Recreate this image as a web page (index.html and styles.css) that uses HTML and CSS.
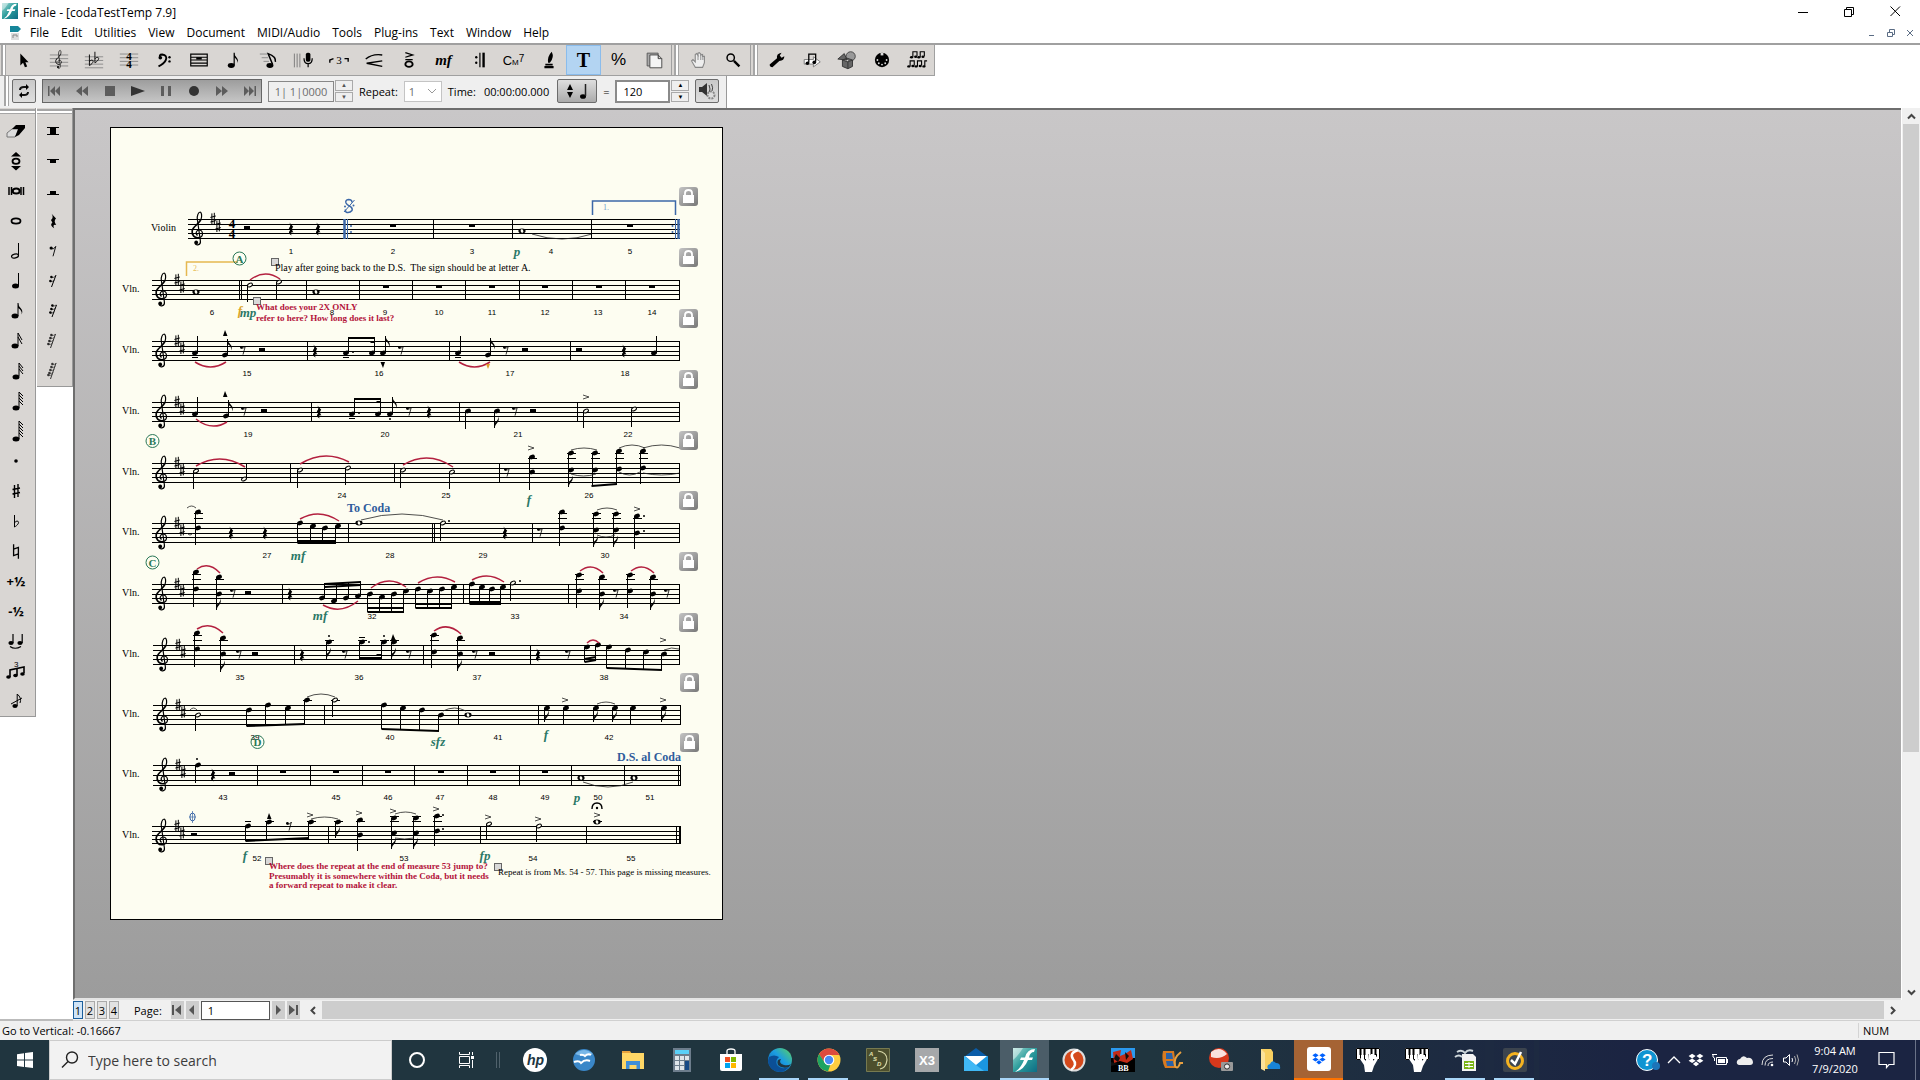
FILE: index.html
```
<!DOCTYPE html>
<html lang="en">
<head>
    <meta charset="UTF-8">
    <meta name="viewport" content="width=device-width, initial-scale=1.0">
    <title>Finale - [codaTestTemp 7.9]</title>
    <link rel="stylesheet" href="styles.css">
</head>
<body>
    <!-- shared music glyphs -->
    <svg class="defs" width="0" height="0" aria-hidden="true">
        <defs>
            <linearGradient id="lock-bg" x1="0" y1="0" x2="1" y2="1">
                <stop offset="0" stop-color="#c4c4c4"/><stop offset="1" stop-color="#777"/>
            </linearGradient>
            <linearGradient id="fin" x1="0" y1="0" x2="1" y2="1">
                <stop offset="0" stop-color="#9fd8d2"/><stop offset=".5" stop-color="#2c9c9c"/><stop offset="1" stop-color="#0d6c84"/>
            </linearGradient>
            <linearGradient id="edge" x1="0" y1="1" x2="1" y2="0">
                <stop offset="0" stop-color="#0c59a4"/><stop offset=".55" stop-color="#1b9de2"/><stop offset="1" stop-color="#5fd35a"/>
            </linearGradient>
            <g id="clef" fill="none" stroke="#000">
                <path stroke-width="1.2" d="M-.4 2.4C-3 1-1.8-3 1-3C5-3 6.2 3.4 1.2 4.6"/>
                <path stroke-width="1.7" d="M1.2 4.6C-3.4 5.4-6.6 2-5.8-2.4C-5-6.4 1-9 3-13.6"/>
                <path stroke-width="1.2" d="M3-13.6C4.2-17 3.6-20.5 2.2-21C.2-21-1-17-.7-14L2.4 8C3 12-1.6 13-3 10.4"/>
                <circle cx="-1.8" cy="9.4" r="1.9" fill="#000" stroke="none"/>
            </g>
            <path id="sharp" fill="none" stroke="#000" d="M-1.1-5.6V6M1.3-6.2V5.4M-2.6-1.6L2.8-3M-2.6 3L2.8 1.6"/>
            <path id="flat" fill="none" stroke="#000" d="M-2-7V5C1 3.4 3 .6 1.6-.6C.4-1.4-1.2-.4-2 .8"/>
            <path id="natural" fill="none" stroke="#000" stroke-width="1.1" d="M-2-6V3.4L2 2M2 6V-3.4L-2-2"/>
            <path id="rest-q" d="M-1.6-6.4L2.2-2.2Q-.2 0 2.4 3.4Q-1.2 2.6.6 6.4Q-3.8 3.8-1 1.4L-2.2-.8Q.4-3-1.6-6.4Z"/>
            <g id="rest-8"><circle cx="-1.6" cy="-2.6" r="1.4"/><path fill="none" stroke="#000" stroke-width=".8" d="M-2-2Q1-1 2.4-4L0 4.6"/></g>
            <g id="dn"><circle cx="-1.6" cy="-2" r="1.3"/><path fill="none" stroke="#000" stroke-width=".6" d="M-2-1.4Q0-1 2.4-2.6"/></g>
            <path id="flag" d="M0 0Q.4 3 2.6 5Q5.4 8 3.6 11.4Q4.4 7.6 0 5Z"/>
            <ellipse id="head" rx="3" ry="2.2" transform="rotate(-20)"/>
            <g id="whole"><ellipse rx="3.6" ry="2.4"/><ellipse rx="1.3" ry="1.8" fill="#fefef2" transform="rotate(-20)"/></g>
            <g id="finale-icon"><path fill="url(#fin)" d="M0 0H24V24H0Z"/><path fill="#fff" d="M2 24Q8 20 11 12H7L8 9.5H12Q14 1 22 1L21 4Q17 4 16 9.5H20L19 12H15Q11 22 2 24Z"/><path fill="#fff" opacity=".45" d="M0 0H10Q5 8 0 12Z"/></g>
            <g id="dropbox"><path d="M5 1L9.500 4L5 7L.5 4ZM15 1L19.500 4L15 7L10.500 4ZM5 7L9.500 10L5 13L.5 10ZM15 7L19.500 10L15 13L10.500 10ZM10 11L14 14L10 17L6 14Z"/></g>
            <g id="hand-keys"><path fill="#fff" d="M0 0H24V12H0Z"/><path stroke="#000" fill="none" d="M.5 .5H23.500V11.500H.5ZM4.500 6V12M8.500 6V12M12.500 6V12M16.500 6V12M20.500 6V12"/><path stroke="#000" stroke-width="2" d="M4.500 0V7M8.500 0V7M15.500 0V7M19.500 0V7"/><path fill="#fff" d="M9 24L8 17L4 11L6 9L10 13L10 6H12.500L13 12L15 6H17.500L17 13L21 8L22.500 10L18 18L16 24Z"/></g>
        </defs>
    </svg>

    <header class="titlebar">
        <svg class="app-icon" viewBox="0 0 24 24"><use href="#finale-icon"/></svg>
        <span class="title">Finale - [codaTestTemp 7.9]</span>
        <div class="win-buttons">
            <button aria-label="Minimize"><svg width="11" height="11"><path d="M0 6.500H10"/></svg></button>
            <button aria-label="Restore"><svg width="11" height="11"><path d="M.5 3.500H7.500V10.500H.5ZM2.500 3V1.500H9.500V8.500H8"/></svg></button>
            <button aria-label="Close"><svg width="11" height="11"><path d="M.5 .5L10 10M10 .5L.5 10"/></svg></button>
        </div>
    </header>

    <nav class="menubar">
        <svg class="doc-icon" width="12" height="16"><path fill="#16869a" d="M1 1H9L12 4L9 7H1Z"/><path fill="#ddd" d="M2 8H10V15H2Z"/><path stroke="#888" fill="none" d="M4 13V10H8V12"/></svg>
        <button>File</button><button>Edit</button><button>Utilities</button><button>View</button><button>Document</button><button>MIDI/Audio</button><button>Tools</button><button>Plug-ins</button><button>Text</button><button>Window</button><button>Help</button>
        <div class="mdi-buttons">
            <button aria-label="Minimize document"><svg width="8" height="8"><path d="M1 6.500H6"/></svg></button>
            <button aria-label="Restore document"><svg width="8" height="8"><path d="M.5 3.500H5.500V7.500H.5ZM2.500 3V.5H7.500V5.500H6"/></svg></button>
            <button aria-label="Close document"><svg width="8" height="8"><path d="M1 1L7 7M7 1L1 7"/></svg></button>
        </div>
    </nav>

    <div class="toolbar tools">
        <div class="group">
            <i class="grip"></i>
            <button aria-label="Selection"><svg viewBox="0 0 24 24"><path d="M8 5V18L11 15L13 20L15.500 19L13.500 14.500H17Z"/></svg></button>
            <button aria-label="Staff"><svg viewBox="0 0 24 24"><path class="lines" d="M2 6.500H22M2 10.500H22M2 14.500H22M2 18.500H22"/><use href="#clef" transform="translate(12 14) scale(.6)"/></svg></button>
            <button aria-label="Key signature"><svg viewBox="0 0 24 24"><path class="lines" d="M2 8.500H22M2 12.500H22M2 16.500H22M2 20.500H22"/><use href="#flat" transform="translate(9 13)"/><use href="#flat" transform="translate(15 10)"/></svg></button>
            <button aria-label="Time signature"><svg viewBox="0 0 24 24"><path class="lines" d="M2 5.500H22M2 9.500H22M2 13.500H22M2 17.500H22"/><text class="time" x="12" y="12">4</text><text class="time" x="12" y="21">4</text></svg></button>
            <button aria-label="Clef"><svg viewBox="0 0 24 24"><path fill="none" stroke="#000" stroke-width="2" d="M8 10Q6 6 10 6Q16 7 14 12Q12 16 6 19"/><circle cx="8" cy="9.500" r="2"/><circle cx="18" cy="9" r="1.300"/><circle cx="18" cy="13.500" r="1.300"/></svg></button>
            <button aria-label="Measure"><svg viewBox="0 0 24 24"><path fill="none" stroke="#000" stroke-width="1.300" d="M3 5.500H21V18.500H3ZM3 9H21M3 12H21M3 15.500H21"/><path d="M9 9H15V11.500H9Z"/></svg></button>
            <button aria-label="Simple entry"><svg viewBox="0 0 24 24"><ellipse cx="9" cy="18" rx="3.800" ry="2.700"/><path stroke="#000" stroke-width="1.300" d="M12.200 18V4"/><use href="#flag" x="12" y="4"/></svg></button>
            <button aria-label="Speedy entry"><svg viewBox="0 0 24 24"><ellipse cx="13" cy="18" rx="3.800" ry="2.700"/><path fill="none" stroke="#000" stroke-width="1.600" d="M16 17L11 5Q20 8 19 14"/><path class="lines" d="M2 5.500H10M4 9.500H11M6 13.500H12"/></svg></button>
            <button aria-label="HyperScribe"><svg viewBox="0 0 24 24"><path fill="none" stroke="#777" d="M1.500 5V20M4.500 5V20M7.500 5V20"/><rect x="14" y="4" width="5" height="10" rx="2"/><path fill="none" stroke="#000" stroke-width="1.300" d="M12 10Q12 16 16.500 16Q21 16 21 10M16.500 16V20"/></svg></button>
            <button aria-label="Tuplet"><svg viewBox="0 0 24 24"><path fill="none" stroke="#000" stroke-width="1.500" d="M2 15V12L6 10.500M18 10.500H22V14"/><text x="9" y="16" class="trip">3</text></svg></button>
            <button aria-label="Smart shape"><svg viewBox="0 0 24 24"><path fill="none" stroke="#000" stroke-width="1.500" d="M3 11Q10 5 21 6.500M21 13L4 15.500L21 19"/></svg></button>
            <button aria-label="Articulation"><svg viewBox="0 0 24 24"><path fill="none" stroke="#000" stroke-width="1.400" d="M8 4L16 6.500L8 9M8 11.500H16"/><ellipse cx="12" cy="16.500" rx="4" ry="3" fill="none" stroke="#000" stroke-width="2"/></svg></button>
            <button class="expr" aria-label="Expression">mf</button>
            <button aria-label="Repeat"><svg viewBox="0 0 24 24"><path stroke="#000" stroke-width="2.600" d="M17 4V20"/><path stroke="#000" stroke-width="1.300" d="M13 4V20"/><circle cx="9" cy="9" r="1.300"/><circle cx="9" cy="15" r="1.300"/></svg></button>
            <button class="chord" aria-label="Chord">C<small>M</small><sup>7</sup></button>
            <button aria-label="Lyrics"><svg viewBox="0 0 24 24"><path d="M15 3Q10 8 11 15H13Q18 9 15 3ZM8 16H16V18H8ZM7 18.500H17V21H7Z"/></svg></button>
            <button class="text-tool active" aria-label="Text" aria-pressed="true">T</button>
            <button class="percent" aria-label="Resize">%</button>
            <button aria-label="Page layout"><svg viewBox="0 0 24 24"><path fill="#aaa" stroke="#555" d="M4.500 4.500H16.500V18.500H4.500Z"/><path fill="#f4f4f4" stroke="#444" d="M7.500 6.500H16.500L20.500 10.500V20.500H7.500ZM16.500 6.500V10.500H20.500"/></svg></button>
        </div>
        <div class="group">
            <i class="grip"></i>
            <button aria-label="Hand grabber"><svg viewBox="0 0 24 24"><path fill="#eee" stroke="#888" stroke-width="1.200" d="M9 20L5 13L6.500 11.500L9 14V6L10.500 5L12 7V4.500L13.500 4L15 5.500V6.500L17 6V8L19 8V15L17 20Z"/><path stroke="#888" d="M12 7V12M15 6V12M17.300 8V12"/></svg></button>
            <button aria-label="Zoom"><svg viewBox="0 0 24 24"><circle cx="9.500" cy="9.500" r="4" fill="none" stroke="#000" stroke-width="1.600"/><path stroke="#000" stroke-width="2.600" d="M13 13L19 19"/></svg></button>
        </div>
        <div class="group">
            <i class="grip"></i>
            <button aria-label="Special tools"><svg viewBox="0 0 24 24"><path d="M4 17L12 10Q11 5 17 4L15 7L17 9.500L20 8Q20 13 14.500 13L7 20Q4 20 4 17Z"/></svg></button>
            <button aria-label="Note mover"><svg viewBox="0 0 24 24"><path fill="#fff" stroke="#777" d="M3.500 11.500H13.500V8.500L21 14L13.500 19.500V16.500H3.500Z"/><path fill="none" stroke="#000" stroke-width="1.400" d="M8.500 15V5.500H16V14"/><circle cx="7" cy="15.500" r="2"/><circle cx="14.500" cy="14.500" r="2"/></svg></button>
            <button aria-label="Graphics"><svg viewBox="0 0 24 24"><circle cx="16" cy="8" r="5" fill="#999" stroke="#444"/><path fill="#666" stroke="#333" d="M2 11L9 5L12 12ZM7 12L12 10L18 12V19L13 21.500L7 19ZM7 12L13 14L18 12M13 14V21"/></svg></button>
            <button aria-label="MIDI"><svg viewBox="0 0 24 24"><circle cx="12" cy="12" r="7.800"/><g fill="#ddd"><circle cx="7" cy="12" r="1"/><circle cx="8.500" cy="15.500" r="1"/><circle cx="12" cy="17" r="1"/><circle cx="15.500" cy="15.500" r="1"/><circle cx="17" cy="12" r="1"/><path d="M10.500 4H13.500V7H10.500Z"/></g></svg></button>
            <button aria-label="Mirror"><svg viewBox="0 0 24 24"><path fill="none" stroke="#000" stroke-width="1.200" d="M7.500 9V3H12V8M15.500 9V3H20V8M4.500 19V13H9V18M12.500 19V13H17V18M20.500 19V13H23"/><ellipse cx="6" cy="9" rx="1.700" ry="1.300"/><ellipse cx="10.500" cy="8.500" rx="1.700" ry="1.300"/><ellipse cx="14" cy="9" rx="1.700" ry="1.300"/><ellipse cx="18.500" cy="8.500" rx="1.700" ry="1.300"/><ellipse cx="3" cy="19" rx="1.700" ry="1.300"/><ellipse cx="7.500" cy="18.500" rx="1.700" ry="1.300"/><ellipse cx="11" cy="19" rx="1.700" ry="1.300"/><ellipse cx="15.500" cy="18.500" rx="1.700" ry="1.300"/><ellipse cx="19.500" cy="19" rx="1.700" ry="1.300"/></svg></button>
        </div>
    </div>

    <div class="toolbar playback">
        <i class="grip"></i>
        <button class="raised refresh" aria-label="Playback options"><svg width="14" height="14"><path fill="none" stroke="#111" stroke-width="2" d="M3 6Q3 3 7 3H10M11 8Q11 11 7 11H4"/><path d="M9 0L12 3L9 6ZM5 8L2 11L5 14Z"/></svg></button>
        <div class="transport">
            <button aria-label="To start"><svg viewBox="0 0 16 16"><path d="M2 3H3.500V13H2ZM9 3V13L4 8ZM14 3V13L9 8Z"/></svg></button>
            <button aria-label="Rewind"><svg viewBox="0 0 16 16"><path d="M8 3V13L2 8ZM14 3V13L8 8Z"/></svg></button>
            <button aria-label="Stop"><svg viewBox="0 0 16 16"><path d="M3 3H13V13H3Z"/></svg></button>
            <button aria-label="Play"><svg viewBox="0 0 16 16"><path fill="#333" d="M1 3L15 8L1 13Z"/></svg></button>
            <button aria-label="Pause"><svg viewBox="0 0 16 16"><path d="M3 3H6V13H3ZM10 3H13V13H10Z"/></svg></button>
            <button aria-label="Record"><svg viewBox="0 0 16 16"><circle cx="8" cy="8" r="5" fill="#333"/></svg></button>
            <button aria-label="Fast forward"><svg viewBox="0 0 16 16"><path d="M2 3V13L8 8ZM8 3V13L14 8Z"/></svg></button>
            <button aria-label="To end"><svg viewBox="0 0 16 16"><path d="M2 3V13L7 8ZM7 3V13L12 8ZM12.500 3H14V13H12.500Z"/></svg></button>
        </div>
        <input class="counter" aria-label="Counter" value="1| 1|0000" disabled>
        <div class="spin"><button aria-label="Counter up" disabled>▲</button><button aria-label="Counter down" disabled>▼</button></div>
        <label for="repeat">Repeat:</label>
        <select id="repeat" disabled><option>1</option></select>
        <span>Time:</span>
        <span class="time-value">00:00:00.000</span>
        <button class="raised beat" aria-label="Beat unit"><svg width="26" height="18"><path d="M3 8L6 2L9 8ZM3 10H9L6 16Z"/><ellipse cx="19" cy="14.500" rx="3" ry="2.300"/><path stroke="#222" stroke-width="1.500" d="M21.500 14V2"/></svg></button>
        <label for="tempo">=</label>
        <input id="tempo" class="tempo" value="120">
        <div class="spin"><button aria-label="Tempo up">▲</button><button aria-label="Tempo down">▼</button></div>
        <button class="raised sound" aria-label="Playback settings"><svg width="20" height="20"><path fill="#333" d="M2 6H5L10 2V15L5 11H2Z"/><path fill="none" stroke="#444" d="M12 4Q14 8 12 12M14.500 3Q16.500 7 15 10"/><circle cx="14" cy="14" r="3.500" fill="#ddd" stroke="#888" stroke-width="2" stroke-dasharray="2 1"/></svg></button>
    </div>

    <main class="workspace">
        <aside class="palettes">
            <div class="palette">
                <i class="grip-h"></i>
                <button aria-label="Eraser"><svg viewBox="0 0 24 24"><path fill="#ddd" stroke="#777" d="M3 14L8 10H16L11 18H3Z"/><path d="M8 10L12 6H21V9L15 16L11 18L14 10Z"/></svg></button>
                <button aria-label="Repitch"><svg viewBox="0 0 24 24"><path d="M7 7.500L12 3L17 7.500ZM7 17L12 21.500L17 17Z"/><ellipse cx="12" cy="12.300" rx="3.500" ry="2.600" fill="none" stroke="#000" stroke-width="1.800"/></svg></button>
                <button aria-label="Double whole note"><svg viewBox="0 0 24 24"><path stroke="#000" stroke-width="1.500" d="M5 8V16M7.500 8V16M17 8V16M19.500 8V16"/><ellipse cx="12.200" cy="12" rx="3.500" ry="2.500" fill="none" stroke="#000" stroke-width="2"/></svg></button>
                <button aria-label="Whole note"><svg viewBox="0 0 24 24"><ellipse cx="12" cy="12" rx="4.500" ry="2.600" fill="none" stroke="#000" stroke-width="1.800"/></svg></button>
                <button aria-label="Half note"><svg viewBox="0 0 24 24"><ellipse cx="11" cy="17" rx="3.500" ry="2" fill="none" stroke="#000" stroke-width="1.200" transform="rotate(-15 11 17)"/><path stroke="#000" d="M14.500 16V4"/></svg></button>
                <button aria-label="Quarter note"><svg viewBox="0 0 24 24"><ellipse cx="11.500" cy="17" rx="3.500" ry="2.500"/><path stroke="#000" d="M14.500 17V4"/></svg></button>
                <button aria-label="Eighth note"><svg viewBox="0 0 24 24"><ellipse cx="11" cy="17" rx="3.500" ry="2.500"/><path stroke="#000" d="M14 17V4"/><use href="#flag" x="14" y="4"/></svg></button>
                <button aria-label="16th note"><svg viewBox="0 0 24 24"><ellipse cx="11" cy="17" rx="3.500" ry="2.500"/><path fill="none" stroke="#000" d="M14 17V4L18 11M14 8L18 15"/></svg></button>
                <button aria-label="32nd note"><svg viewBox="0 0 24 24"><ellipse cx="12" cy="18" rx="3.500" ry="2.500"/><path fill="none" stroke="#000" d="M15 17V4L19 9M15 7L19 12M15 10L19 15"/></svg></button>
                <button aria-label="64th note"><svg viewBox="0 0 24 24"><ellipse cx="12" cy="19" rx="3.500" ry="2.500"/><path fill="none" stroke="#000" d="M15 19V3L19 7M15 6L19 10M15 9L19 13M15 12L19 16"/></svg></button>
                <button aria-label="128th note"><svg viewBox="0 0 24 24"><ellipse cx="12" cy="20" rx="3.500" ry="2.500"/><path fill="none" stroke="#000" d="M15 20V2L19 6M15 5L19 9M15 8L19 12M15 11L19 15M15 14L19 18"/></svg></button>
                <button aria-label="Augmentation dot"><svg viewBox="0 0 24 24"><circle cx="12" cy="12" r="1.800"/></svg></button>
                <button aria-label="Sharp"><svg viewBox="0 0 24 24"><path fill="none" stroke="#000" stroke-width="1.400" d="M10.500 6V19M14 5V18M8.500 10.500L16 9M8.500 15L16 13.500"/></svg></button>
                <button aria-label="Flat"><svg viewBox="0 0 24 24"><use href="#flat" x="12.500" y="13"/></svg></button>
                <button aria-label="Natural"><svg viewBox="0 0 24 24"><use href="#natural" transform="translate(12 12.500) scale(1.200)"/></svg></button>
                <button class="half-step" aria-label="Half step up">+½</button>
                <button class="half-step" aria-label="Half step down">-½</button>
                <button aria-label="Tie"><svg viewBox="0 0 24 24"><ellipse cx="7" cy="14" rx="2.600" ry="2"/><ellipse cx="16" cy="14" rx="2.600" ry="2"/><path fill="none" stroke="#000" stroke-width="1.200" d="M9 14V5M18.200 14V5M6 17.500Q11 21 17 17.500"/></svg></button>
                <button aria-label="Tuplet entry"><svg viewBox="0 0 24 24"><path fill="none" stroke="#000" stroke-width="1.600" d="M6 18V11L20 8V14M13 16V10"/><ellipse cx="4.500" cy="18" rx="2.300" ry="1.700"/><ellipse cx="11.500" cy="16.500" rx="2.300" ry="1.700"/><ellipse cx="18.500" cy="15" rx="2.300" ry="1.700"/><text class="tiny" x="10" y="8">3</text></svg></button>
                <button aria-label="Grace note"><svg viewBox="0 0 24 24"><ellipse cx="11" cy="17" rx="2.600" ry="1.900"/><path fill="none" stroke="#000" d="M13.200 17V5Q18 9 16 14M7 15L18 9"/></svg></button>
            </div>
            <div class="palette">
                <i class="grip-h"></i>
                <button aria-label="Double whole rest"><svg viewBox="0 0 24 24"><path stroke="#000" d="M6 8.500H18M6 15.500H18"/><path d="M9 9H15V15H9Z"/></svg></button>
                <button aria-label="Whole rest"><svg viewBox="0 0 24 24"><path stroke="#000" d="M6 10.500H18"/><path d="M9 10H15V14H9Z"/></svg></button>
                <button aria-label="Half rest"><svg viewBox="0 0 24 24"><path stroke="#000" d="M6 15.500H18"/><path d="M9 12H15V15H9Z"/></svg></button>
                <button aria-label="Quarter rest"><svg viewBox="0 0 24 24"><use href="#rest-q" transform="translate(12.500 12) scale(1.150)"/></svg></button>
                <button aria-label="Eighth rest"><svg viewBox="0 0 24 24"><use href="#rest-8" transform="translate(12 12) scale(1.150)"/></svg></button>
                <button aria-label="16th rest"><svg viewBox="0 0 24 24"><use href="#dn" x="12" y="10"/><use href="#dn" x="11" y="14"/><path stroke="#000" d="M15 6L10.500 18"/></svg></button>
                <button aria-label="32nd rest"><svg viewBox="0 0 24 24"><use href="#dn" x="13" y="8.500"/><use href="#dn" x="12" y="12"/><use href="#dn" x="11" y="15.500"/><path stroke="#000" d="M15.500 6L11 18"/></svg></button>
                <button aria-label="64th rest"><svg viewBox="0 0 24 24"><g opacity=".8"><use href="#dn" x="12" y="8"/><use href="#dn" x="11" y="11"/><use href="#dn" x="10" y="14"/><use href="#dn" x="9" y="17"/><path stroke="#000" d="M14.500 5L9.500 19"/></g></svg></button>
                <button aria-label="128th rest"><svg viewBox="0 0 24 24"><g opacity=".75"><use href="#dn" x="13" y="7"/><use href="#dn" x="12" y="10"/><use href="#dn" x="11" y="13"/><use href="#dn" x="10" y="16"/><use href="#dn" x="9" y="18"/><path stroke="#000" d="M15 4L9.500 20"/></g></svg></button>
            </div>
        </aside>

        <section class="document">
            <div class="canvas-row">
                <div class="canvas">
                    <svg id="score" class="score" viewBox="111 128 611 791" role="img" aria-label="Violin part"></svg>
                </div>
                <div class="vscroll">
                    <button aria-label="Scroll up"><svg width="9" height="9"><path d="M1 6.500L4.500 3L8 6.500"/></svg></button>
                    <div class="track"><div class="thumb"></div></div>
                    <button aria-label="Scroll down"><svg width="9" height="9"><path d="M1 2.500L4.500 6L8 2.500"/></svg></button>
                </div>
            </div>
            <div class="page-row">
                <button class="tab current">1</button><button class="tab">2</button><button class="tab">3</button><button class="tab">4</button>
                <label for="page">Page:</label>
                <button class="nav" aria-label="First page"><svg width="10" height="12"><path d="M0 1H2V11H0ZM9 1V11L3 6Z"/></svg></button>
                <button class="nav" aria-label="Previous page"><svg width="10" height="12"><path d="M7 1V11L2 6Z"/></svg></button>
                <input id="page" value="1">
                <button class="nav" aria-label="Next page"><svg width="10" height="12"><path d="M3 1V11L8 6Z"/></svg></button>
                <button class="nav" aria-label="Last page"><svg width="10" height="12"><path d="M1 1V11L7 6ZM8 1H10V11H8Z"/></svg></button>
                <div class="hscroll">
                    <button aria-label="Scroll left"><svg width="9" height="9"><path d="M6 1L2.500 4.500L6 8"/></svg></button>
                    <div class="thumb"></div>
                    <button aria-label="Scroll right"><svg width="9" height="9"><path d="M3 1L6.500 4.500L3 8"/></svg></button>
                </div>
            </div>
        </section>
    </main>

    <footer class="statusbar"><span>Go to Vertical: -0.16667</span><span class="num">NUM</span></footer>

    <div class="taskbar">
        <button class="start" aria-label="Start"><svg viewBox="0 0 16 16" fill="#fff"><path d="M0 2.200L7 1.200V7.600H0ZM8 1L16 0V7.600H8ZM0 8.600H7V15L0 14ZM8 8.600H16V16L8 15Z"/></svg></button>
        <div class="search">
            <svg width="18" height="18"><circle cx="11" cy="6.500" r="5.500"/><path d="M7 10.500L1 16.500"/></svg>
            <input placeholder="Type here to search" aria-label="Type here to search">
        </div>
        <button aria-label="Cortana"><svg viewBox="0 0 24 24"><circle cx="12" cy="12" r="7" fill="none" stroke="#fff" stroke-width="2"/></svg></button>
        <button aria-label="Task view"><svg viewBox="0 0 24 24"><path fill="none" stroke="#fff" d="M5.500 8.500H15.500V15.500H5.500ZM5.500 4V6.500H15.500V4M5.500 20V17.500H15.500V20M18.500 4V7M18.500 12V20"/><path fill="#fff" d="M17 8H20V11H17Z"/></svg></button>
        <i class="task-sep"></i>
        <button aria-label="HP"><svg viewBox="0 0 24 24"><circle cx="12" cy="12" r="12" fill="#fff"/><text class="hp" x="4" y="17">hp</text></svg></button>
        <button aria-label="OpenOffice"><svg viewBox="0 0 24 24"><circle cx="12" cy="12" r="11" fill="#3a87c8"/><path fill="#7ab8e8" d="M3 6Q12-2 21 6Q12 10 3 6Z"/><path fill="none" stroke="#fff" stroke-width="2" d="M8 7Q11 6 13 8Q16 5 19 7M2 14Q7 12 9 15Q13 11 18 13"/></svg></button>
        <button aria-label="File Explorer"><svg viewBox="0 0 24 24"><path fill="#e8a33d" d="M1 3H9L11 6H1Z"/><path fill="#ffd766" d="M1 5H23V21H1Z"/><path fill="#3f8fd8" d="M5 21V13H19V21H15.500V17H8.500V21Z"/></svg></button>
        <button aria-label="Calculator"><svg viewBox="0 0 24 24"><path fill="#6d7d8c" d="M3 0H21V24H3Z"/><path fill="#5ad0f8" d="M5 2H19V6H5Z"/><path fill="#dfe5ea" d="M5 8H9V12H5ZM10 8H14V12H10ZM15 8H19V12H15ZM5 13H9V17H5ZM10 13H14V17H10ZM5 18H9V22H5ZM10 18H14V22H10Z"/><path fill="#174a86" d="M15 13H19V22H15Z"/></svg></button>
        <button aria-label="Microsoft Store"><svg viewBox="0 0 24 24"><path fill="none" stroke="#fff" stroke-width="1.300" d="M8 6V3Q8 1 12 1Q16 1 16 3V6"/><path fill="#fff" d="M1 6H23V21Q23 23 21 23H3Q1 23 1 21Z"/><path fill="#f25022" d="M6 9H11V14H6Z"/><path fill="#7fba00" d="M12 9H17V14H12Z"/><path fill="#00a4ef" d="M6 15H11V20H6Z"/><path fill="#ffb900" d="M12 15H17V20H12Z"/></svg></button>
        <button class="running" aria-label="Edge"><svg viewBox="0 0 24 24"><circle cx="12" cy="12" r="12" fill="url(#edge)"/><path fill="#0b4f96" d="M1 9Q6 6 11 9Q7 12 9 17Q13 22 21 19Q17 24 12 24Q1 23 0 13Z"/><path fill="#22353f" d="M13 11Q10 15 16 17Q20 18 23 16L21 19Q14 21 10 17Q8 11 13 11Z"/></svg></button>
        <button class="running" aria-label="Chrome"><svg viewBox="0 0 24 24"><circle cx="12" cy="12" r="11.500" fill="#ffcd40"/><path fill="#dd4b3e" d="M2 6Q6 .5 12 .5Q19 .5 22.500 7H12L7 14Z"/><path fill="#1da362" d="M2 6L8 15H14L11 23.500Q1 22 .5 12Q.5 9 2 6Z"/><circle cx="12" cy="12" r="5.300" fill="#fff"/><circle cx="12" cy="12" r="4.200" fill="#4a8af4"/></svg></button>
        <button aria-label="ASD"><svg viewBox="0 0 24 24"><path fill="#4d4f2d" stroke="#777a50" d="M.5 .5H23.500V23.500H.5Z"/><path fill="none" stroke="#d8d8a8" stroke-width="1.200" d="M12 3Q21 4 21 12Q20 20 14 21"/><text class="asd" x="3" y="8">A</text><text class="asd" x="7" y="13">S</text><text class="asd" x="11" y="18">D</text></svg></button>
        <button aria-label="X3"><svg viewBox="0 0 24 24"><path fill="#a6a8aa" d="M0 0H24V24H0Z"/><text class="x3" x="4" y="17">X3</text></svg></button>
        <button aria-label="Mail"><svg viewBox="0 0 24 24"><path fill="#0a5ca8" d="M0 9L12 0L24 9Z"/><path fill="#1a96e0" d="M0 8H24V23H0Z"/><path fill="#40b8f5" d="M0 8L20 23H0Z"/><path fill="#fff" d="M1 8H23L12 17Z"/></svg></button>
        <button class="running focused" aria-label="Finale"><svg viewBox="0 0 24 24"><use href="#finale-icon"/></svg></button>
        <button aria-label="SmartMusic"><svg viewBox="0 0 24 24"><circle cx="12" cy="12" r="10.500" fill="#d4491c" stroke="#ddd" stroke-width="2"/><path fill="none" stroke="#fff" stroke-width="2.500" d="M16 2Q7 5 11 11Q16 17 9 22"/></svg></button>
        <button aria-label="Band in a Box"><svg viewBox="0 0 24 24"><path d="M0 0H24V24H0Z"/><path fill="#2b9af0" d="M0 0H24V10H0Z"/><path fill="#c32a16" d="M2 4L10 2L9 8L14 6L20 2L22 11L16 15L9 13L3 15Z"/><path fill="#111" d="M5 6L9 10L7 14L3 11ZM14 4L18 8L15 12ZM0 14L8 16L0 18Z"/><text class="bb" x="7" y="23">BB</text></svg></button>
        <button aria-label="Video editor"><svg viewBox="0 0 24 24"><path fill="#d87a20" d="M3 3H14L16 20H5Q1 12 3 3Z"/><path fill="#2a62a8" d="M6 5H12L13 11H6ZM6 13H13L14 18H7Z"/><path fill="none" stroke="#e8a040" stroke-width="2" d="M21 4Q13 10 15 18Q18 22 20 15H23"/></svg></button>
        <button aria-label="Snapshot"><svg viewBox="0 0 24 24"><circle cx="10" cy="10" r="10" fill="#d8381c"/><path fill="#fff" opacity=".85" d="M2 4Q11-3 18 6Q11 12 2 9Z"/><rect x="12" y="14" width="12" height="9" rx="1" fill="#999"/><circle cx="18" cy="18.500" r="2.600" fill="#eee" stroke="#333"/></svg></button>
        <button aria-label="OneDrive folder"><svg viewBox="0 0 24 24"><path fill="#f8cf60" d="M3 1H13L15 4V21H3Z"/><path fill="#fbe29a" d="M3 1L7 5V23L3 21Z"/><path fill="#1884d8" d="M10 21Q8 17 12 16Q14 11 18 15Q23 15 22 21Z"/></svg></button>
        <button class="attention" aria-label="Dropbox"><svg viewBox="0 0 24 24"><rect width="24" height="24" rx="3" fill="#fff"/><use href="#dropbox" fill="#0061fe" transform="translate(5 5.500) scale(.7)"/></svg></button>
        <button aria-label="Piano"><svg viewBox="0 0 24 24"><use href="#hand-keys"/></svg></button>
        <button aria-label="Piano 2"><svg viewBox="0 0 24 24"><use href="#hand-keys"/></svg></button>
        <button class="running" aria-label="Spreadsheet"><svg viewBox="0 0 24 24"><path fill="#f4f4f4" d="M8 6H19L22 9V23H8Z"/><path fill="#7cb518" d="M10 13H20V21H10Z"/><path stroke="#fff" d="M11 15.500H19M11 18.500H19M15 14V20"/><path fill="none" stroke="#cfd8dc" stroke-width="2" d="M3 4Q8 1 11 5Q14 1 19 3M1 9Q5 6 8 9"/></svg></button>
        <button class="running" aria-label="Norton"><svg viewBox="0 0 24 24"><rect width="24" height="24" rx="2" fill="#3c444e"/><circle cx="12" cy="13" r="7.500" fill="none" stroke="#f5b321" stroke-width="3"/><path fill="none" stroke="#fff" stroke-width="2.500" d="M8 12L12 16L18 4"/></svg></button>
        <div class="tray">
            <button aria-label="Help"><svg width="24" height="24"><circle cx="11" cy="12" r="10.500" fill="#0f94d2" stroke="#fff"/><text class="help" x="6" y="18">?</text><circle cx="20" cy="18" r="4" fill="#1d74b8"/></svg></button>
            <button aria-label="Hidden icons"><svg width="14" height="10"><path fill="none" stroke="#fff" stroke-width="1.300" d="M1 8L7 2L13 8"/></svg></button>
            <button aria-label="Dropbox status"><svg width="16" height="14" viewBox="0 0 20 18"><use href="#dropbox" fill="#fff"/></svg></button>
            <button aria-label="Battery"><svg width="18" height="14"><path fill="none" stroke="#fff" d="M5.500 4.500H15.500V11.500H5.500ZM1 1.500H6M2 1.500V4L3.500 5V8"/><path fill="#fff" d="M7 6H14V10H7ZM16 6H17V10H16Z"/></svg></button>
            <button aria-label="OneDrive"><svg width="18" height="14"><path fill="#eee" d="M3 12Q0 11 1 8Q2 6 4 6Q7 1 11 5Q16 4 17 9Q17 12 14 12Z"/></svg></button>
            <button aria-label="Network"><svg width="14" height="14"><path fill="none" stroke="#ddd" d="M1 12Q1 2 12 2M4 12.500Q4 5.500 12 5.500M7 13Q7 9 12 9"/><circle cx="11" cy="12" r="1.300" fill="#fff"/></svg></button>
            <button aria-label="Volume"><svg width="18" height="14"><path fill="none" stroke="#fff" d="M1.500 5H4L7.500 1.500V12.500L4 9H1.500ZM10 5Q11 7 10 9"/><path fill="none" stroke="#aaa" d="M12.500 3Q15 7 12.500 11M15 1.500Q18 7 15 12.500"/></svg></button>
            <button class="clock"><span>9:04 AM</span><span>7/9/2020</span></button>
            <button class="notes" aria-label="Notifications"><svg width="18" height="18"><path fill="none" stroke="#fff" stroke-width="1.200" d="M1 1.500H16V13.500H11L8.500 16.500V13.500H1Z"/></svg></button>
            <i class="desktop"></i>
        </div>
    </div>

    <script src="score.js"></script>
</body>
</html>
```
FILE: styles.css
```
* {
    box-sizing: border-box;
}
body {
    margin: 0;
    height: 100vh;
    display: flex;
    flex-direction: column;
    overflow: hidden;
    background: #fff;
    color: #000;
    font-family: "Open Sans", "Noto Sans", sans-serif;
    font-size: 12px;
}
button, input, select {
    font: inherit;
    color: inherit;
    margin: 0;
    padding: 0;
    border: 0;
    background: none;
}
svg {
    display: block;
    flex: none;
}
.defs {
    position: absolute;
}

/* title + menu */
.titlebar {
    display: flex;
    align-items: center;
    height: 22px;
    padding: 0 2px;
    gap: 5px;
}
.app-icon {
    width: 16px;
    height: 16px;
}
.title {
    padding-top: 2px;
}
.win-buttons {
    display: flex;
    margin-left: auto;
}
.win-buttons button {
    width: 46px;
    height: 20px;
    display: flex;
    align-items: center;
    justify-content: center;
}
.win-buttons path {
    fill: none;
    stroke: #000;
}
.menubar {
    display: flex;
    align-items: center;
    height: 21px;
    padding-left: 9px;
    gap: 12px;
}
.doc-icon {
    margin-right: -3px;
}
.mdi-buttons {
    display: flex;
    gap: 11px;
    margin-left: auto;
    padding-right: 6px;
}
.mdi-buttons path {
    fill: none;
    stroke: #5a6c84;
}

/* toolbars */
.toolbar {
    display: flex;
    align-items: center;
}
.grip {
    align-self: stretch;
    width: 5px;
    margin: 0 1px;
    border-left: 2px solid #a6a6a6;
    border-right: 1px solid #a6a6a6;
    background: #fff;
}
.tools {
    height: 33px;
    border-top: 2px solid #a0a0a0;
}
.group {
    display: flex;
    height: 31px;
    background: #d9d6d3;
    border-bottom: 1px solid #a0a0a0;
    border-right: 1px solid #a0a0a0;
}
.group button {
    width: 35px;
    display: flex;
    align-items: center;
    justify-content: center;
}
.group button svg {
    width: 22px;
    height: 22px;
}
.group .active {
    background: #b3d4f2;
    border: 1px solid #8abcec;
}
.group .grip {
    margin-right: 0;
}
.group + .group .grip {
    margin: 0 1px 0 2px;
}
.lines {
    stroke: #888;
    fill: none;
}
.group .text-tool {
    font: bold 20px "Liberation Serif", serif;
}
.group .percent {
    font: 17px "Liberation Sans", sans-serif;
}
.group .expr {
    font: italic bold 15px "Liberation Serif", serif;
}
.group .chord {
    font: 13px "Liberation Sans", sans-serif;
}
.chord small {
    font-size: 8px;
    padding-top: 4px;
}
.chord sup {
    font-size: 10px;
    padding-bottom: 4px;
}
.time {
    font: bold 12px "Liberation Serif", serif;
    text-anchor: middle;
}
.trip {
    font: 12px "Liberation Serif", serif;
}
.playback {
    align-self: flex-start;
    height: 32px;
    gap: 6px;
    padding: 0 7px 2px 3px;
    background: #efefef;
    border-right: 1px solid #999;
    font-size: 11px;
}
.playback .grip {
    margin-right: -3px;
}
.raised {
    display: flex;
    align-items: center;
    justify-content: center;
    height: 24px;
    border: 1px solid #6c6c6c;
    border-radius: 2px;
    background: linear-gradient(#c9c9c9, #dedede);
}
.refresh, .sound {
    width: 24px;
}
.beat {
    width: 40px;
    background: linear-gradient(#dedede, #ababab);
}
.transport {
    display: flex;
    align-items: center;
    justify-content: space-between;
    width: 220px;
    height: 24px;
    padding: 0 3px;
    border: 1px solid #666;
    background: linear-gradient(#9d9d9d, #c6c6c6);
}
.transport svg {
    width: 16px;
    height: 16px;
    fill: #5c5c5c;
}
.counter {
    width: 66px;
    height: 21px;
    border: 1px solid #888;
    text-align: center;
    font-size: 11px;
    color: #6d6d6d;
    background: #efefef;
}
.spin {
    display: flex;
    flex-direction: column;
    width: 18px;
    height: 22px;
    margin-left: -5px;
    gap: 1px;
}
.spin button {
    flex: 1;
    border: 1px solid #aaa;
    font-size: 6px;
    line-height: 8px;
}
.spin button:disabled {
    color: #555;
}
#repeat {
    appearance: none;
    width: 38px;
    height: 21px;
    padding-left: 4px;
    border: 1px solid #c4c4c4;
    font-size: 11px;
    color: #6d6d6d;
    opacity: 1;
    background: #fff url("data:image/svg+xml,%3Csvg xmlns='http://www.w3.org/2000/svg' width='10' height='6'%3E%3Cpath d='M1 1l4 4 4-4' fill='none' stroke='%23999'/%3E%3C/svg%3E") no-repeat right 4px center;
}
.time-value {
    margin: 0 2px;
}
.tempo {
    width: 55px;
    height: 23px;
    padding-left: 6px;
    border: 2px solid #8a8a8a;
    background: #fff;
}

/* workspace */
.workspace {
    flex: 1;
    display: flex;
    min-height: 0;
}
.palettes {
    display: flex;
    align-items: flex-start;
    width: 73px;
    gap: 1px;
    border-bottom: 2px solid #bbb;
}
.palette {
    display: flex;
    flex-direction: column;
    width: 36px;
    background: #d9d6d3;
    border-right: 1px solid #999;
    border-bottom: 1px solid #999;
}
.grip-h {
    height: 5px;
    margin: 1px 0 2px;
    border-top: 2px solid #a6a6a6;
    border-bottom: 1px solid #a6a6a6;
    background: #fff;
}
.palette button {
    height: 30px;
    padding-right: 3px;
    display: flex;
    align-items: center;
    justify-content: center;
}
.palette button svg {
    width: 24px;
    height: 24px;
}
.palette .half-step {
    font: bold 13px "Open Sans", sans-serif;
}
.tiny {
    font: 8px "Liberation Sans", sans-serif;
}
.document {
    flex: 1;
    display: flex;
    flex-direction: column;
    min-width: 0;
}
.canvas-row {
    flex: 1;
    display: flex;
    min-height: 0;
}
.canvas {
    flex: 1;
    overflow: hidden;
    padding: 17px 0 0 35px;
    border-left: 2px solid #6e6e6e;
    border-top: 2px solid #6e6e6e;
    border-bottom: 2px solid #e4e4e4;
    background: linear-gradient(#c9c7c8, #9c9c9c);
}
.score {
    width: 613px;
    height: 793px;
    border: 1px solid #000;
    background: #fdfdf1;
}
.vscroll {
    display: flex;
    flex-direction: column;
    width: 19px;
    background: #f0f0f0;
    border-left: 1px solid #fff;
}
.vscroll button, .hscroll button {
    display: flex;
    align-items: center;
    justify-content: center;
    height: 16px;
}
.vscroll path, .hscroll path {
    fill: none;
    stroke: #444;
    stroke-width: 2;
}
.track {
    flex: 1;
}
.track .thumb {
    height: 73%;
    margin: 0 1px;
    background: #cdcdcd;
}
.page-row {
    display: flex;
    align-items: center;
    height: 21px;
    gap: 2px;
    background: #f0f0f0;
    border-bottom: 1px solid #d0d0d0;
    font-size: 11px;
}
.tab {
    width: 10px;
    height: 18px;
    border: 1px solid #aaa;
    background: #e2e2e2;
}
.tab.current {
    border-color: #1a5e9c;
    background: #cfe4f7;
}
.page-row label {
    padding: 0 7px 0 13px;
}
.nav {
    display: flex;
    align-items: center;
    justify-content: center;
    width: 13px;
    height: 18px;
    background: #cdcdcd;
    fill: #555;
}
#page {
    width: 69px;
    height: 19px;
    padding-left: 6px;
    border: 1px solid #555;
    background: #fff;
}
.hscroll {
    flex: 1;
    display: flex;
    align-items: center;
    margin-left: 4px;
    padding-right: 20px;
}
.hscroll button {
    width: 16px;
}
.hscroll .thumb {
    flex: 1;
    height: 18px;
    background: #cdcdcd;
}

/* status */
.statusbar {
    display: flex;
    align-items: center;
    height: 19px;
    padding-left: 2px;
    background: #f0f0f0;
    font-size: 11px;
}
.num {
    margin-left: auto;
    width: 62px;
    padding-left: 4px;
    border-left: 1px solid #d4d4d4;
}

/* windows taskbar */
.taskbar {
    display: flex;
    align-items: stretch;
    height: 40px;
    color: #fff;
    background: linear-gradient(90deg, #20353f, #20353f 60%, #1b2442 85%);
}
.taskbar > button {
    width: 49px;
    display: flex;
    align-items: center;
    justify-content: center;
}
.taskbar > button svg {
    width: 24px;
    height: 24px;
}
.taskbar > .start svg {
    width: 16px;
    height: 16px;
}
.search {
    display: flex;
    align-items: center;
    width: 343px;
    padding-left: 11px;
    gap: 9px;
    background: #f2f2f2;
    border: 1px solid #ccc;
}
.search svg {
    fill: none;
    stroke: #222;
    stroke-width: 1.4px;
}
.search input {
    flex: 1;
    min-width: 0;
    font-size: 14px;
    outline: none;
}
.search input::placeholder {
    color: #3c3c3c;
    opacity: 1;
}
.task-sep {
    width: 4px;
    height: 16px;
    margin: 12px 10px 12px 6px;
    border-left: 1px solid #50626c;
    border-right: 1px solid #50626c;
}
.running {
    box-shadow: inset 4px 0 #20353f, inset -5px 0 #20353f, inset 0 -2px #a9d6f8;
}
.attention ~ .running {
    box-shadow: inset 4px 0 #1d2a41, inset -5px 0 #1d2a41, inset 0 -2px #a9d6f8;
}
.running.focused {
    background: #4b5d68;
    box-shadow: inset 0 -2px #a9d6f8;
}
.attention {
    background: #a56334;
    border-bottom: 2px solid #ff7300;
}
.tray {
    display: flex;
    align-items: center;
    margin-left: auto;
    gap: 7px;
}
.clock {
    display: flex;
    flex-direction: column;
    align-items: center;
    width: 56px;
    line-height: 18px;
    font-size: 11px;
}
.notes {
    padding: 0 12px 0 8px;
}
.desktop {
    width: 5px;
    height: 40px;
    border-left: 1px solid #6a7288;
}
.hp {
    font: italic bold 14px "Liberation Sans", sans-serif;
    fill: #20353f;
}
.asd {
    font: italic bold 6px "Liberation Sans", sans-serif;
    fill: #e0e0b0;
}
.x3 {
    font: bold 13px "Liberation Sans", sans-serif;
    fill: #fff;
}
.bb {
    font: bold 8px "Liberation Serif", serif;
    fill: #fff;
}
.help {
    font: bold 17px "Liberation Sans", sans-serif;
    fill: #fff;
}

/* score */
.staff {
    stroke: #000;
    fill: none;
}
.slur {
    fill: none;
    stroke: #b3203f;
    stroke-width: 1.5px;
}
.tie {
    fill: none;
    stroke: #222;
    stroke-width: 0.8px;
}
.beam {
    stroke: #000;
    stroke-width: 2px;
}
.hollow {
    fill: #fefef2;
    stroke: #000;
}
.label, .note {
    font: 10px "Liberation Serif", serif;
}
.measure {
    font: 8px "Liberation Sans", sans-serif;
    text-anchor: middle;
}
.meter {
    font: bold 13px "Liberation Serif", serif;
    text-anchor: middle;
}
.note.small {
    font-size: 9px;
}
.note.red {
    font-weight: bold;
    font-size: 9px;
    fill: #b3123a;
}
.dynamic {
    font: italic bold 13px "Liberation Serif", serif;
    fill: #2b7866;
    text-anchor: middle;
}
.dynamic.gold {
    fill: #dba52c;
}
.mark {
    font: bold 11px "Liberation Serif", serif;
    fill: #2b7858;
    text-anchor: middle;
}
.ring {
    fill: none;
    stroke: #2b7858;
}
.jump {
    font: bold 12px "Liberation Serif", serif;
    fill: #2f5c9c;
}
.ending {
    font: 8px "Liberation Serif", serif;
    fill: #6f9ccc;
}
.ending.gold {
    fill: #e8c05c;
}
.blue {
    fill: none;
    stroke: #3c68a8;
}
.gold-line {
    fill: none;
    stroke: #e5b850;
    stroke-width: 1.5px;
}
.handle {
    fill: #d8d8d8;
    stroke: #666;
}
```
FILE: score.js
```
// Each system: staff top, left and right edge, then one command per entry.
//   bar x | rw/rh/rq/r8 x | w x y | q/h x y stemEnd | q8 = with flag
//   c/c8 x y1 y2 stemEnd (chord) | beam x1 y1 x2 y2 | slur/tie x1 y1 x2 y2 apex
//   acc/hat/vee/ten/dot x y | n x number | dyn x y text
const systems = [
    { top: 219, left: 188, right: 680, label: 'Violin', items: `
        rh 247;rq 291;rq 318;rw 393;bar 433;rw 472;bar 512;w 522 231;tie 532 234 592 234 239;bar 591;rw 630;
        n 291 1;n 393 2;n 472 3;n 551 4;n 630 5;dyn 517 256 p` },
    { top: 280, left: 152, right: 680, items: `
        w 196 292;bar 239;bar 241;h 250 285 302;h 279 282 299;slur 250 280 280 279 274;bar 306;w 316 292;bar 359;rw 386;bar 412;
        rw 439;bar 465;rw 492;bar 519;rw 545;bar 572;rw 599;bar 625;rw 652;bar 679;
        n 212 6;n 332 8;n 385 9;n 439 10;n 492 11;n 545 12;n 598 13;n 652 14;dyn 248 317 mp` },
    { top: 341, left: 152, right: 680, items: `
        q 195 353 336;ten 195 357;q8 225 355 339;hat 225 333;slur 195 362 226 362 367;r8 243;rh 262;bar 307;rq 315;
        q 346 353 337;dot 353 352;ten 346 357;beam 349 338 375 338;beam 371 342 375 342;q 372 353 337;q8 383 353 336;vee 383 365;r8 401;
        bar 449;q 458 353 336;ten 458 357;q8 488 355 338;slur 459 362 490 362 367;r8 506;rh 525;bar 570;rh 579;rq 624;q 654 353 336;bar 679;
        n 247 15;n 379 16;n 510 17;n 625 18` },
    { top: 402, left: 152, right: 680, items: `
        q 195 414 397;q8 226 416 400;hat 225 394;slur 196 419 227 422 426;r8 244;rh 264;bar 311;rq 319;
        q 352 414 398;dot 359 413;ten 352 418;beam 355 399 380 399;beam 377 402 380 402;q 378 414 398;q8 390 414 397;dot 390 419;r8 409;rq 429;
        bar 459;q 468 411 429;q8 497 411 428;r8 515;rh 533;bar 577;h 586 411 428;acc 586 397;h 634 409 427;bar 679;
        n 248 19;n 385 20;n 518 21;n 628 22` },
    { top: 463, left: 152, right: 680, items: `
        h 196 471 489;h 244 479 464;slur 196 466 245 467 459;bar 290;h 300 470 488;h 348 468 485;slur 300 464 349 462 456;bar 394;
        h 403 470 488;h 452 472 489;slur 403 465 453 467 458;bar 499;r8 507;c 532 457 472 490;acc 531 448;
        c8 571 453 470 487;c 595 453 470 486;beam 592 486 617 484;c 619 451 469 484;c 643 451 468 484;
        tie 571 450 597 450 448;tie 619 448 645 448 445;tie 643 448 680 448 445;tie 571 474 596 474 476;tie 619 472 640 472 475;tie 643 473 680 473 475;bar 679;
        n 342 24;n 446 25;n 589 26;dyn 529 504 f` },
    { top: 523, left: 152, right: 680, items: `
        c 198 512 528 545;tie 187 508 196 508 506;tie 187 533 193 533 535;rq 231;rq 265;
        q 300 523 542;q 313 526 542;q 325 528 542;q 338 526 542;beam 298 541 336 541;beam 298 543 336 543;slur 300 519 339 521 514;
        bar 348;w 359 523;tie 361 520 443 520 514;bar 432;bar 434;h 443 523 541;dot 449 521;rq 505;bar 532;r8 540;
        c 562 512 528 546;c8 596 514 530 547;c8 616 514 530 547;tie 597 510 617 510 508;tie 597 535 615 535 537;c 637 516 533 549;dot 644 516;dot 644 531;acc 637 509;bar 679;
        n 267 27;n 390 28;n 483 29;n 605 30;dyn 298 560 mf` },
    { top: 584, left: 152, right: 680, items: `
        c 196 572 589 607;c8 219 577 594 610;slur 197 569 220 573 566;r8 233;rh 248;bar 282;rq 290;
        q 322 598 583;q 334 601 583;q 346 598 582;q 358 596 581;beam 325 584 361 582;beam 325 587 361 585;slur 323 605 358 601 609;
        q 370 594 612;q 382 597 612;q 394 594 612;q 406 591 612;beam 368 608 404 608;beam 368 612 404 612;slur 371 588 406 587 581;
        q 418 589 608;q 430 591 608;q 442 589 608;q 454 587 608;beam 416 604 452 604;beam 416 608 452 608;slur 418 583 455 582 577;
        bar 463;q 472 584 604;q 482 587 604;q 492 589 604;q 503 587 604;beam 470 602 501 602;beam 470 604 501 604;slur 472 580 504 582 576;
        h 513 583 601;dot 520 581;bar 568;c 579 575 591 608;c8 602 577 594 610;slur 580 571 603 573 567;r8 616;
        c 630 575 591 608;c8 653 577 594 610;slur 631 571 654 573 567;r8 667;bar 679;
        n 372 32;n 515 33;n 624 34;dyn 320 620 mf` },
    { top: 645, left: 153, right: 680, items: `
        c 197 633 649 667;c8 223 638 654 672;slur 197 629 223 633 626;r8 239;rh 255;bar 294;rq 302;
        q8 329 642 659;dot 329 636;r8 345;q 362 642 659;dot 369 642;ten 362 637;q 384 642 659;dot 384 636;beam 360 658 382 658;beam 377 655 382 655;
        q8 394 642 659;hat 393 637;r8 409;bar 423;c 434 635 652 668;c8 460 638 654 671;slur 434 631 461 634 627;r8 475;rh 492;
        bar 530;rq 538;r8 568;q 587 647 662;q 598 645 661;beam 585 659 596 657;beam 585 662 596 660;slur 587 643 599 643 640;
        q 609 647 668;q 628 650 669;q 646 652 669;q 664 654 670;beam 607 668 662 670;acc 663 640;tie 664 650 679 649 648;bar 679;
        n 240 35;n 359 36;n 477 37;n 604 38` },
    { top: 705, left: 153, right: 681, items: `
        h 198 715 731;tie 190 710 197 710 708;q 249 710 726;q 268 705 725;q 288 708 725;q 307 700 724;beam 247 726 305 724;
        tie 307 697 335 697 694;bar 324;h 335 700 717;q 384 705 729;q 403 708 730;q 422 710 730;q 441 715 731;beam 382 729 439 731;
        tie 443 711 466 711 708;bar 458;w 468 715;bar 538;q8 547 708 722;q 566 708 724;acc 565 700;q8 596 708 722;q8 615 708 722;tie 597 704 615 704 702;
        q 633 708 724;q8 664 708 722;acc 663 700;bar 680;
        n 255 39;n 390 40;n 498 41;n 609 42;dyn 546 739 f;dyn 438 746 sfz` },
    { top: 765, left: 153, right: 681, lines: [0, 5, 10, 15, 20], items: `
        q 198 765 783;dot 197 759;rq 213;rh 232;bar 257;rw 283;bar 310;rw 336;bar 362;rw 388;bar 414;rw 441;bar 467;rw 493;bar 519;rw 545;
        bar 571;w 581 778;bar 624;w 634 778;tie 583 782 633 782 787;bar 678;bar 680;
        n 223 43;n 336 45;n 388 46;n 440 47;n 493 48;n 545 49;n 598 50;n 650 51;dyn 577 802 p` },
    { top: 826, left: 152, right: 681, lines: [0, 5, 9, 13, 17], items: `
        rh 194;q 248 826 841;ten 248 821;q 269 822 840;hat 269 816;r8 289;q 311 822 839;acc 310 815;beam 246 841 309 838;
        tie 311 819 338 819 817;bar 328;q8 338 822 838;c 360 820 835 851;acc 359 813;c8 394 818 833 849;acc 393 811;c8 416 818 833 849;
        tie 395 814 416 814 812;tie 395 838 414 838 839;c 437 816 831 846;dot 443 815;dot 443 829;acc 436 809;
        bar 480;h 489 824 840;acc 488 817;h 539 826 842;acc 538 819;bar 586;w 597 822;acc 597 815;bar 676;bar 679;bar 680;
        n 257 52;n 404 53;n 533 54;n 631 55;dyn 245 860 f;dyn 485 860 fp` }
];

const locks = [187, 248, 309, 370, 431, 491, 552, 613, 673, 733];

function text(cls, x, y, value) {
    return `<text class="${cls}" x="${x}" y="${y}">${value}</text>`;
}

function stem(x, y, end) {
    const sx = end < y ? x + 2.5 : x - 2.5;
    const px = Math.round(sx) - 0.5;
    return { px: px, svg: `<path class="staff" d="M${px} ${y}V${end}"/>` };
}

function flag(px, end, up) {
    return `<use href="#flag" transform="translate(${px} ${end}) scale(1 ${up ? 1 : -1})"/>`;
}

function head(kind, x, y, top) {
    let out = '';
    for (let ly = top - 5; ly >= y - 2; ly -= 5) {
        out += `<path class="staff" d="M${x - 4} ${ly + 0.5}H${x + 5}"/>`;
    }
    if (kind === 'w') return out + `<use href="#whole" x="${x}" y="${y}"/>`;
    if (kind === 'h') return out + `<ellipse class="hollow" cx="${x}" cy="${y}" rx="2.600" ry="1.700" transform="rotate(-25 ${x} ${y})"/>`;
    return out + `<use href="#head" x="${x}" y="${y}"/>`;
}

function curve(cls, p) {
    const [x1, y1, x2, y2, apex] = p;
    const cy = 2 * apex - (y1 + y2) / 2;
    return `<path class="${cls}" d="M${x1} ${y1}Q${(x1 + x2) / 2} ${cy} ${x2} ${y2}"/>`;
}

function drawItem(entry, sys) {
    const parts = entry.trim().split(' ');
    const kind = parts[0];
    const p = parts.slice(1).map(Number);
    const [x, y] = p;
    const top = sys.top;
    const height = sys.lines ? sys.lines[4] : 19;
    switch (kind) {
        case 'bar': return `<path class="staff" d="M${x + 0.5} ${top}V${top + height + 1}"/>`;
        case 'rw': return `<rect x="${x - 3}" y="${top + 5}" width="6" height="3"/>`;
        case 'rh': return `<rect x="${x - 3}" y="${top + 7}" width="6" height="3"/>`;
        case 'rq': return `<use href="#rest-q" x="${x}" y="${top + 10}"/>`;
        case 'r8': return `<use href="#rest-8" x="${x}" y="${top + (sys.top === 826 ? 0 : 9)}"/>`;
        case 'w': return head('w', x, y, top);
        case 'q': case 'h': case 'q8': {
            const s = stem(x, y, p[2]);
            return head(kind[0], x, y, top) + s.svg + (kind === 'q8' ? flag(s.px, p[2], p[2] < y) : '');
        }
        case 'c': case 'c8': {
            const s = stem(x, y, p[3]);
            return head('q', x, y, top) + head('q', x, p[2], top) + s.svg + (kind === 'c8' ? flag(s.px, p[3], false) : '');
        }
        case 'beam': return `<path class="beam" d="M${x - 0.5} ${y}L${p[2]} ${p[3]}"/>`;
        case 'slur': case 'tie': return curve(kind, p);
        case 'acc': return `<path class="tie" d="M${x - 3} ${y - 2}L${x + 3} ${y}L${x - 3} ${y + 2}"/>`;
        case 'hat': return `<path d="M${x - 2} ${y + 3}L${x} ${y - 3}L${x + 2.5} ${y + 3}Z"/>`;
        case 'vee': return `<path d="M${x - 2.5} ${y - 3}L${x} ${y + 3}L${x + 2} ${y - 3}Z"/>`;
        case 'ten': return `<path class="staff" d="M${x - 3} ${y + 0.5}H${x + 3}"/>`;
        case 'dot': return `<circle cx="${x}" cy="${y}" r="1"/>`;
        case 'n': return text('measure', x, top + 35, parts[2]);
        case 'dyn': return text('dynamic', x, y, parts[3]);
    }
    return '';
}

function drawSystem(sys) {
    const lines = sys.lines || [0, 5, 10, 14, 19];
    const clefX = sys.left + 10;
    let out = lines.map(l => `<path class="staff" d="M${sys.left} ${sys.top + l + 0.5}H${sys.right}"/>`).join('');
    out += text('label', sys.label ? 151 : 122, sys.top + 12, sys.label || 'Vln.');
    out += `<use href="#clef" x="${clefX}" y="${sys.top + 14}"/>`;
    out += `<use href="#sharp" x="${clefX + 15}" y="${sys.top}"/><use href="#sharp" x="${clefX + 20}" y="${sys.top + 7}"/>`;
    return out + sys.items.split(';').map(item => drawItem(item, sys)).join('');
}

function circled(x, y, letter) {
    return `<circle class="ring" cx="${x}" cy="${y}" r="6.500"/>` + text('mark', x, y + 4, letter);
}

function handle(x, y) {
    return `<rect class="handle" x="${x + 0.5}" y="${y + 0.5}" width="7" height="7"/>`;
}

function lock(x, y) {
    return `<g transform="translate(${x} ${y})"><rect width="19" height="19" rx="3" fill="url(#lock-bg)"/>` +
        '<rect x="4" y="8" width="11" height="8" fill="#fff"/>' +
        '<path d="M6 9V6Q6 3 9.500 3Q13 3 13 6V9" fill="none" stroke="#fff" stroke-width="1.800"/></g>';
}

let svg = systems.map(drawSystem).join('');

// meter, segno, repeats and endings
svg += text('meter', 232, 228, '4') + text('meter', 232, 238, '4');
svg += '<path class="blue" stroke-width="2.500" d="M344.500 219V239M678.500 219V239"/><path class="blue" d="M347.500 219V239M675.500 219V239"/>';
svg += '<g fill="#3c68a8"><circle cx="351" cy="226" r="1"/><circle cx="351" cy="232" r="1"/><circle cx="672.500" cy="226" r="1"/><circle cx="672.500" cy="232" r="1"/></g>';
svg += '<path class="blue" stroke-width="1.500" d="M352 202.500Q352 199.500 348.500 199.500Q345 200 346 203Q347 205 349.500 206Q353 208 352 210.500Q350 213 347 212.500Q345 212 345.500 209.500"/><path class="blue" d="M344 212L354.500 200"/><circle cx="345" cy="206.500" r="1" fill="#3c68a8"/><circle cx="353.500" cy="205.500" r="1" fill="#3c68a8"/>';
svg += '<path class="blue" stroke-width="1.500" d="M592.500 215V201H675.500V215"/>' + text('ending', 603, 210, '1.');
svg += '<path class="gold-line" d="M186.500 276V262H238"/>' + text('ending gold', 193, 271, '2.');
svg += text('dynamic gold', 240, 315, 'f');
svg += '<path d="M486 364L488 369L490 364Z" fill="#e0a030"/>';
svg += '<g class="blue"><ellipse cx="192.500" cy="817" rx="2.600" ry="4"/><path d="M189 817H196M192.500 811V823" stroke-width=".7"/></g>';
svg += '<path d="M592 809Q592 803 597 803Q602 803 602 809" fill="none" stroke="#000" stroke-width="1.400"/><circle cx="597" cy="808" r="1.200"/>';

// rehearsal marks and jumps
svg += circled(239.5, 258.5, 'A') + circled(152.5, 441, 'B') + circled(152.5, 562.5, 'C') + circled(257.5, 742, 'D');
svg += text('jump', 347, 512, 'To Coda') + text('jump', 617, 761, 'D.S. al Coda');

// text blocks
svg += handle(271, 258) + text('note', 275, 271, 'Play after going back to the D.S.&#160; The sign should be at letter A.');
svg += handle(253, 297) + text('note red', 256, 310, 'What does your 2X ONLY') + text('note red', 256, 321, 'refer to here? How long does it last?');
svg += handle(265, 857) + text('note red', 269, 869, 'Where does the repeat at the end of measure 53 jump to?') +
    text('note red', 269, 879, 'Presumably it is somewhere within the Coda, but it needs') + text('note red', 269, 888, 'a forward repeat to make it clear.');
svg += handle(494, 863) + text('note small', 498, 875, 'Repeat is from Ms. 54 - 57. This page is missing measures.');

svg += locks.map((y, i) => lock(i > 7 ? 680 : 679, y)).join('');

document.getElementById('score').innerHTML = svg;
```
